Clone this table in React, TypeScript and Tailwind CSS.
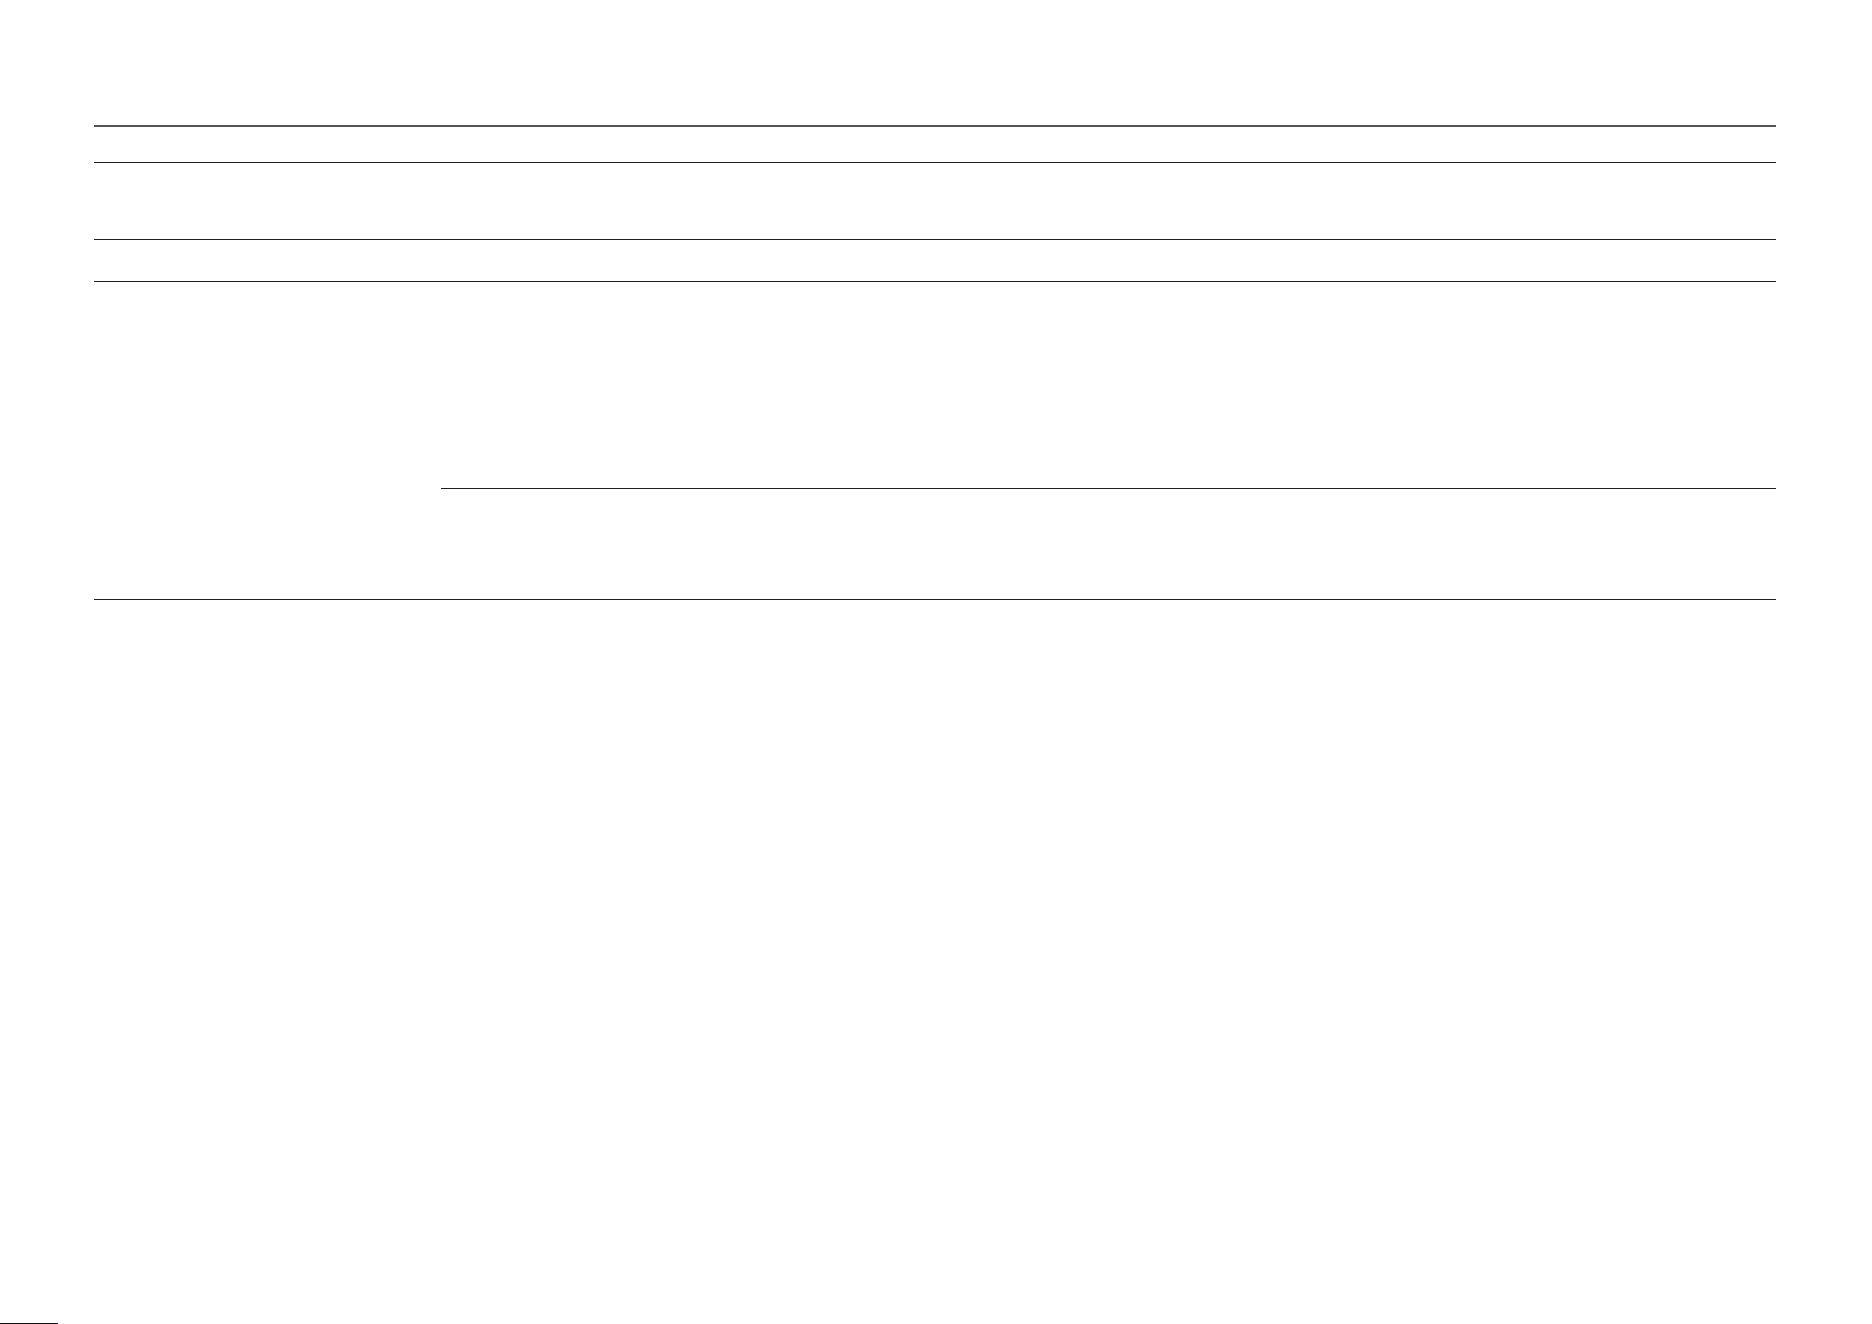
export default function App() {
  return (
    <div className="h-[1324px] flex flex-col bg-white font-['Liberation_Sans',sans-serif]">
      <div className="pt-[125px] pl-[94px] w-[1776px]">
        <div className="border-t-2 border-[#555555]">
          {/* header row */}
          <div className="h-[36px] border-b border-[#1f1f1f]" />
          <div className="h-[77px] border-b border-[#1f1f1f]" />
          <div className="h-[42px] border-b border-[#1f1f1f]" />
          <div className="flex border-b border-[#1f1f1f]">
            <div className="w-[347px] shrink-0" />
            <div className="flex-1 flex flex-col">
              <div className="h-[207px] border-b border-[#1f1f1f]" />
              <div className="h-[110px]" />
            </div>
          </div>
        </div>
      </div>
      <div className="mt-auto flex">
        <div className="w-[57px] h-px bg-[#111111]" />
        <div className="w-px h-px bg-[#2a1fd0]" />
      </div>
    </div>
  );
}
